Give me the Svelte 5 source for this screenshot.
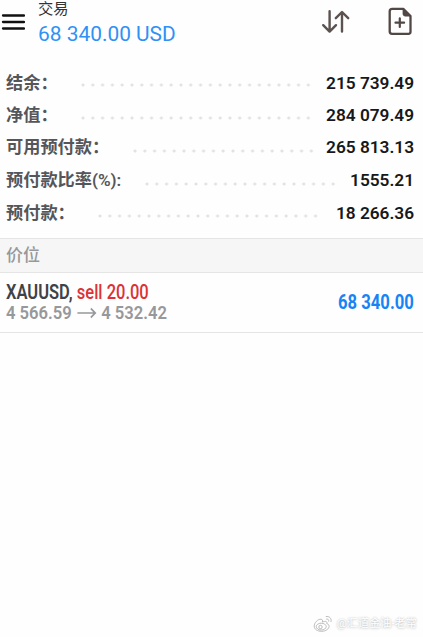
<script lang="ts">
	type Row = { label: string; value: string; start: number; gap: number };

	const rows: Row[] = [
		{ label: '结余：', value: '215 739.49', start: 75, gap: 12 },
		{ label: '净值：', value: '284 079.49', start: 75, gap: 12 },
		{ label: '可用预付款：', value: '265 813.13', start: 127, gap: 10 },
		{ label: '预付款比率(%):', value: '1555.21', start: 139, gap: 10 },
		{ label: '预付款：', value: '18 266.36', start: 92, gap: 14 }
	];

	const position = {
		symbol: 'XAUUSD',
		side: 'sell',
		volume: '20.00',
		open: '4 566.59',
		current: '4 532.42',
		profit: '68 340.00'
	};
</script>

<div class="screen">
	<header>
		<svg class="menu" width="24" height="18" viewBox="0 0 24 18">
			<path d="M2 2.5H23M2 9H23M2 15.5H23" stroke="#111" stroke-width="2.3" stroke-linecap="round" />
		</svg>
		<div class="heading">
			<h1>交易</h1>
			<p class="total">68 340.00 USD</p>
		</div>
		<svg class="sort" width="30" height="26" viewBox="0 0 30 26" fill="none" stroke="#5c524f" stroke-width="2.4" stroke-linecap="round" stroke-linejoin="round">
			<path d="M8.6 2.2V22.4M2.2 16.2L8.6 22.6L15 16.2" />
			<path d="M21 22.6V3.4M14.8 9.2L21 3L27.2 9.2" />
		</svg>
		<svg class="add" width="26" height="30" viewBox="0 0 26 30">
			<path d="M5.3 2.9H16.3L23.5 10V25.8Q23.5 27.8 21.5 27.8H5Q2.7 27.8 2.7 25.6V5.3Q2.7 2.9 5.3 2.9Z" fill="none" stroke="#514744" stroke-width="2.3" stroke-linejoin="round" />
			<path d="M15.6 2.5L23.8 10.4H18.4Q15.6 10.4 15.6 7.6Z" fill="#514744" />
			<path d="M12.8 12.4V21M8.5 16.7H17.1" stroke="#514744" stroke-width="2.2" stroke-linecap="round" />
		</svg>
	</header>

	<section class="account">
		{#each rows as row (row.label)}
			<div class="row">
				<span class="label" style="width: {row.start}px">{row.label}</span>
				<span class="dots" style="margin-right: {row.gap}px"></span>
				<span class="value">{row.value}</span>
			</div>
		{/each}
	</section>

	<h2>价位</h2>

	<div class="position">
		<div class="details">
			<p class="symbol">{position.symbol}, <span class="side">{position.side} {position.volume}</span></p>
			<p class="prices">
				<span>{position.open}</span>
				<svg width="23" height="14" viewBox="0 0 23 14" fill="none" stroke="#96989b" stroke-width="1.7">
					<path d="M1 7H21M16 2.5L21 7L16 11.5" />
				</svg>
				<span>{position.current}</span>
			</p>
		</div>
		<span class="profit">{position.profit}</span>
	</div>

	<footer>
		<svg width="20" height="18" viewBox="0 0 20 18" fill="#fff" stroke="#b4b4b4" stroke-width="0.9">
			<path d="M8 4.2C5 4 1.2 7.6 1.2 11.2C1.2 14.3 4.6 16.3 8.5 16.3C12.9 16.3 16.1 13.8 16.1 11.3C16.1 9.7 15 9 13.8 8.6C14.4 6.6 12.9 5.8 9.4 7C9.8 5.2 9.3 4.3 8 4.2Z" />
			<ellipse cx="8.2" cy="11.6" rx="5" ry="3.4" />
			<circle cx="7.5" cy="12" r="1.7" />
			<path d="M12.8 1.6C16.4.8 19 3.8 17.9 7M13.2 4.1C15 3.7 16.1 5 15.6 6.5" fill="none" />
		</svg>
		<span>@汇道金油-老常</span>
	</footer>
</div>

<style>
	:global(body) {
		background: #fff;
	}

	.screen {
		position: relative;
		box-sizing: border-box;
		width: 423px;
		height: 637px;
		overflow: hidden;
		background: #fefefe;
		font-family: Roboto, 'Noto Sans CJK SC', sans-serif;
	}

	h1,
	h2,
	p {
		margin: 0;
		font-weight: 400;
	}

	header {
		display: flex;
		align-items: flex-start;
		height: 68px;
	}

	.menu {
		margin: 13px 0 0 1px;
	}

	.heading {
		flex: 1;
		padding-left: 13px;
		white-space: nowrap;
	}

	h1 {
		height: 22px;
		font-size: 15.3px;
		line-height: 18px;
		color: #333;
	}

	.total {
		font-size: 20.9px;
		line-height: 25px;
		color: #2f91f5;
	}

	.sort {
		margin: 9px 36px 0 0;
	}

	.add {
		margin: 6px 10px 0 0;
	}

	.account {
		height: 170px;
	}

	.row {
		display: flex;
		align-items: center;
		height: 32.6px;
		padding: 0 9px 0 6px;
	}

	.row:first-child {
		height: 30.6px;
	}

	.label {
		flex: none;
		font-size: 17.2px;
		line-height: 24px;
		font-weight: 600;
		color: #55565a;
		white-space: nowrap;
	}

	.dots {
		flex: 1;
		height: 4px;
		margin-top: 7px;
		background: radial-gradient(circle at 2px 2px, #e2e2e2 1.1px, transparent 1.9px) 0 0 / 9.8px 4px repeat-x;
	}

	.row:first-child .dots {
		margin-top: 3px;
	}

	.value {
		font-size: 17.3px;
		font-weight: 600;
		letter-spacing: -0.03px;
		color: #171819;
	}

	h2 {
		box-sizing: border-box;
		height: 35px;
		padding-left: 6px;
		border: solid #e5e5e5;
		border-width: 1px 0;
		background: #f6f6f6;
		font-size: 17px;
		line-height: 33px;
		font-weight: 500;
		color: #96989b;
	}

	.position {
		display: flex;
		align-items: center;
		justify-content: space-between;
		box-sizing: border-box;
		height: 60px;
		padding: 0 9px 0 6px;
		border-bottom: 1px solid #e5e5e5;
		white-space: nowrap;
	}

	.symbol {
		font-size: 19.3px;
		line-height: 21px;
		font-weight: 600;
		color: #404247;
		transform: scaleX(0.855);
		transform-origin: left;
	}

	.side {
		font-weight: 500;
		color: #dc3235;
	}

	.prices {
		display: flex;
		align-items: center;
		gap: 5px;
		font-size: 18.6px;
		line-height: 21px;
		font-weight: 600;
		color: #96989b;
		transform: scaleX(0.893);
		transform-origin: left;
	}

	.profit {
		font-size: 19.3px;
		font-weight: 700;
		color: #1784f5;
		transform: scaleX(0.863);
		transform-origin: right;
	}

	footer {
		position: absolute;
		right: 6px;
		bottom: 3px;
		display: flex;
		align-items: center;
		gap: 4px;
		font-size: 11.2px;
		line-height: 20px;
		color: #fff;
		text-shadow: 0 0 2px #bbb, 0 1px 3px #ddd;
		white-space: nowrap;
	}
</style>
